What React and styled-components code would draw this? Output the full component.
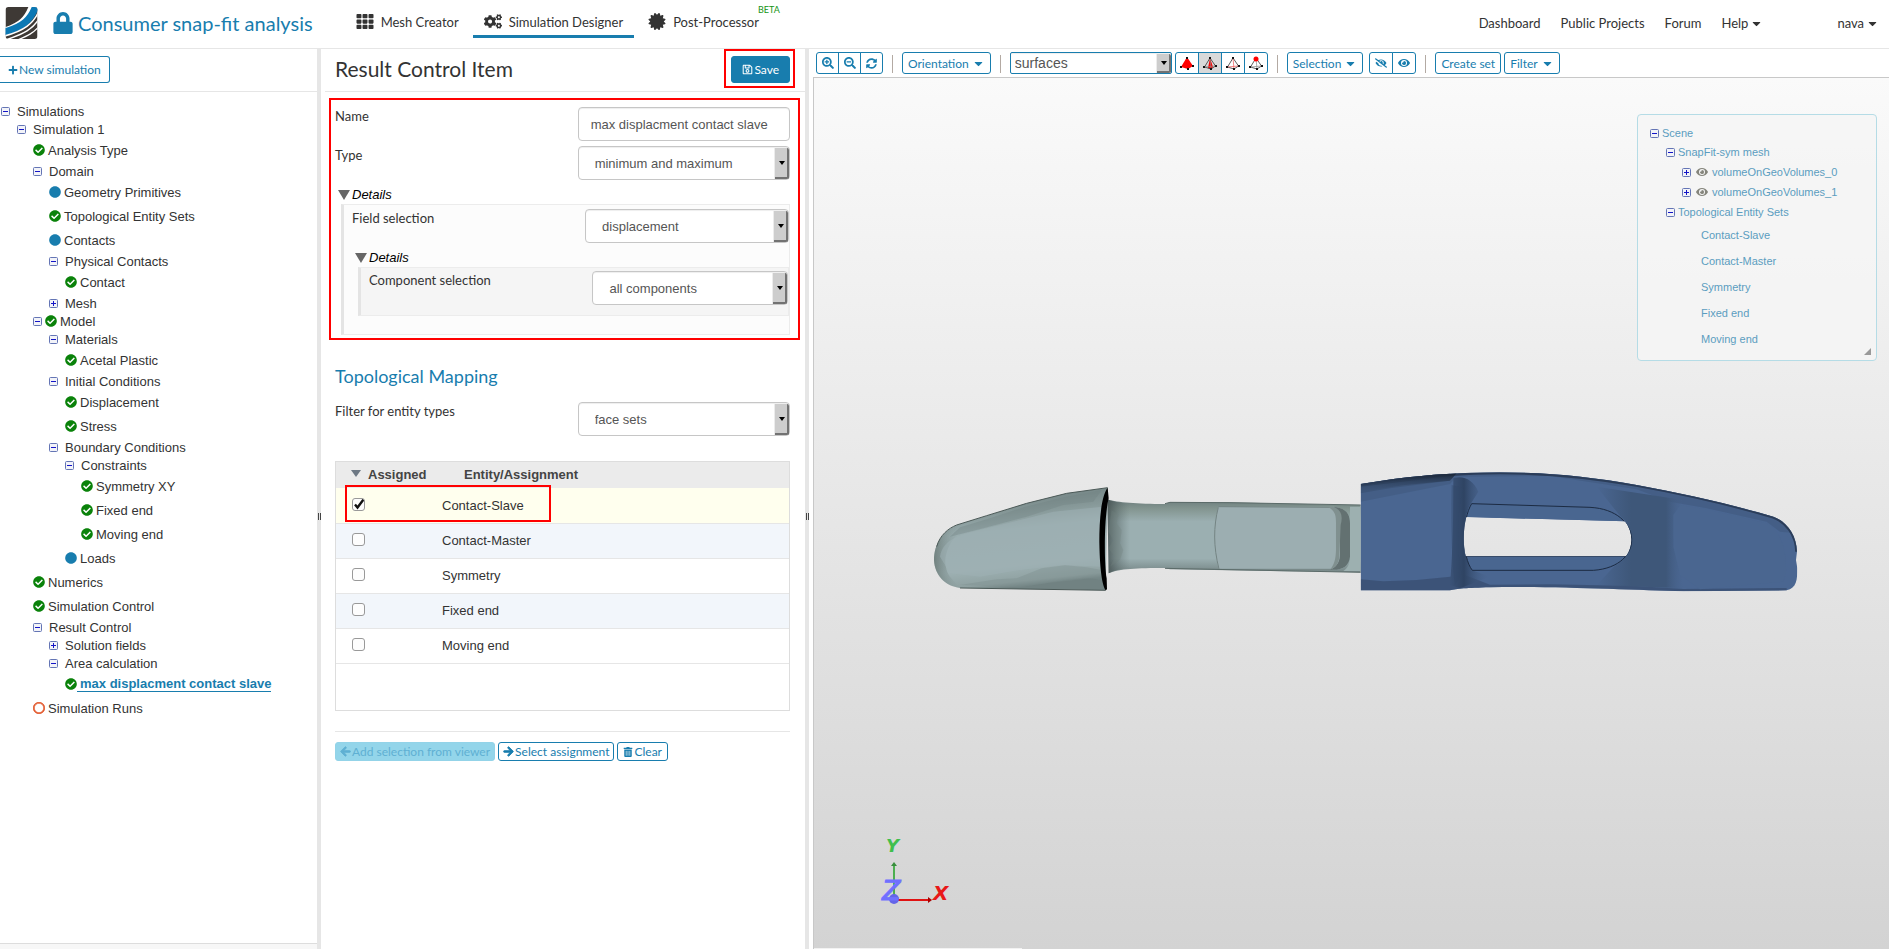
import React, { useState } from 'react';
import styled, { createGlobalStyle, css } from 'styled-components';
import {
	FaArrowLeft,
	FaArrowRight,
	FaCaretDown,
	FaCertificate,
	FaCheckCircle,
	FaCircle,
	FaCogs,
	FaEye,
	FaEyeSlash,
	FaLock,
	FaPlus,
	FaRegCircle,
	FaRegSave,
	FaSearchMinus,
	FaSearchPlus,
	FaSyncAlt,
	FaTh,
	FaTrashAlt
} from 'react-icons/fa';

const BLUE = '#187dae';
const LINE = '#e6e6e6';
const LATO = 'Lato, "Open Sans", sans-serif';
const SANS = '"Liberation Sans", Arial, sans-serif';

const GlobalStyle = createGlobalStyle`
	*, *::before, *::after { box-sizing: border-box; }
	body {
		margin: 0;
		overflow: hidden;
		background: #fff;
		color: #333;
		font-family: ${SANS};
		font-size: 13px;
	}
	button, input, select { font: inherit; color: inherit; }
	a { color: inherit; text-decoration: none; }
`;

const Page = styled.div`
	display: flex;
	flex-direction: column;
	height: 100vh;
`;

/* ---------- header ---------- */

const Header = styled.header`
	display: flex;
	flex: none;
	align-items: flex-start;
	height: 49px;
	padding: 0 10px 0 5px;
	border-bottom: 1px solid ${LINE};
	font-family: ${LATO};
	font-size: 13px;
`;

const Brand = styled.a`
	display: flex;
	align-items: center;
	height: 46px;
	margin-right: 32px;
	color: ${BLUE};
	font-size: 20px;
	white-space: nowrap;

	.lock { width: 20px; height: 22px; margin: 0 5px 0 15px; }
`;

const Nav = styled.nav`
	display: flex;
	flex: 1;
	gap: 3px;
`;

const NavTab = styled.a`
	position: relative;
	display: flex;
	align-items: center;
	gap: 7px;
	height: 38px;
	padding: 8px 11px 0;
	border-bottom: 3px solid ${props => (props.$active ? BLUE : 'transparent')};
	white-space: nowrap;

	svg { width: 18px; height: 17px; }
`;

const Beta = styled.sup`
	position: absolute;
	top: 3px;
	left: 100%;
	margin-left: -12px;
	color: #149414;
	font-size: 9px;
	line-height: 14px;
`;

const UserNav = styled(Nav)`
	flex: none;
	gap: 20px;
	line-height: 46px;

	a { display: flex; align-items: center; gap: 2px; }
	a:last-child { margin-left: 54px; }
`;

/* ---------- shared ---------- */

const Body = styled.main`
	display: grid;
	flex: 1;
	grid-template-columns: 317px 4px 484px 4px minmax(0, 1fr);
	min-height: 0;
`;

const Splitter = styled.div`
	display: flex;
	align-items: center;
	justify-content: center;
	background: ${LINE};

	&::before {
		width: 3px;
		height: 7px;
		margin-top: 34px;
		border: solid #444;
		border-width: 0 1px;
		content: '';
	}
`;

const Button = styled.button`
	display: inline-flex;
	align-items: center;
	justify-content: center;
	gap: ${props => props.$gap || 1}px;
	height: ${props => props.$height || 22}px;
	padding: 0 ${props => props.$pad || 5}px;
	border: 1px solid ${BLUE};
	border-radius: 3px;
	background: ${props => (props.$primary ? BLUE : '#fff')};
	color: ${props => (props.$primary ? '#fff' : BLUE)};
	font-family: ${LATO};
	font-size: 12px;
	white-space: nowrap;
	cursor: pointer;

	.arrow { stroke: currentColor; stroke-width: 40px; }

	&:disabled {
		border-color: #93d3e8;
		background: #93d5ea;
		color: #5fb0d3;
	}
`;

const NewButton = styled(Button)`
	border-left: 0;
	border-radius: 0 3px 3px 0;
`;

const ToggleButton = styled.button`
	display: block;
	flex: none;
	width: 9px;
	height: 9px;
	margin-top: 1px;
	padding: 0;
	border: 0;
	background: none;

	svg { display: block; }
`;

function Toggle ({ open, label }) {
	return (
		<ToggleButton aria-label={label}
					  aria-expanded={open}>
			<svg width="9"
				 height="9"
				 viewBox="0 0 9 9">
				<rect x=".5"
					  y=".5"
					  width="8"
					  height="8"
					  rx="1"
					  fill="#f2f3f8"
					  stroke="#6475b5"/>
				<path d={open ? 'M2 4.5H7' : 'M2 4.5H7M4.5 2V7'}
					  stroke="#1414c8"/>
			</svg>
		</ToggleButton>
	);
}

const Field = css`
	width: 100%;
	height: 34px;
	padding: 0 12px;
	border: 1px solid #c6c6c6;
	border-radius: 4px;
	background: #fff;
	color: #555;
	box-shadow: inset 0 1px 1px rgba(0, 0, 0, .07);
`;

const TextInput = styled.input`${Field}`;

const SelectBox = styled.span`
	position: relative;
	display: block;
	width: ${props => props.$width || 'auto'};

	select {
		${Field};
		padding: 0 20px 0 16px;
		appearance: none;
	}

	${props => props.$compact && css`
		select {
			height: 22px;
			padding: 0 20px 0 4px;
			border-color: ${BLUE};
			border-radius: 2px;
			font-size: 14px;
		}
	`}

	&::before {
		position: absolute;
		top: 2px;
		right: 1px;
		bottom: 1px;
		width: 14px;
		border: solid #727272;
		border-width: 0 2px 2px 0;
		border-radius: 0 2px 2px 0;
		background: #cdcdcd;
		box-shadow: -1px 0 #ececec;
		content: '';
		pointer-events: none;
	}

	&::after {
		position: absolute;
		top: 50%;
		right: 5px;
		margin-top: -2px;
		border: solid transparent;
		border-width: 4px 3px 0;
		border-top-color: #000;
		content: '';
		pointer-events: none;
	}
`;

function Select ({ id, value, compact, width, label }) {
	return (
		<SelectBox $compact={compact}
				   $width={width}>
			<select id={id}
					aria-label={label}
					defaultValue={value}>
				<option>{value}</option>
			</select>
		</SelectBox>
	);
}

/* ---------- simulation tree ---------- */

const Sidebar = styled.aside`
	display: flex;
	flex-direction: column;
	min-width: 0;
`;

const SidebarTop = styled.div`
	height: 43px;
	padding-top: 7px;
	border-bottom: 1px solid ${LINE};
`;

const Tree = styled.ul`
	flex: 1;
	margin: 0;
	padding: 10px 0 0 1px;
	list-style: none;
`;

const TreeItem = styled.li`
	display: flex;
	align-items: center;
	gap: ${props => (props.$folder ? 7 : 3)}px;
	height: ${props => (props.$folder ? 18 : 24)}px;
	margin-left: ${props => props.$level * 16}px;
	white-space: nowrap;
`;

const Status = styled.span`
	display: flex;
	color: ${props => props.$color};

	svg { width: 12px; height: 12px; }
	.ring { stroke: currentColor; stroke-width: 28px; }
`;

const ModelLabel = styled.span`
	display: flex;
	align-items: center;
	gap: 3px;
	margin-left: -4px;
`;

const CurrentItem = styled.a`
	margin-left: -3px;
	padding-left: 3px;
	border-bottom: 1px solid ${BLUE};
	color: ${BLUE};
	font-weight: bold;
	line-height: 14px;
`;

const SidebarFoot = styled.div`
	height: 6px;
	border-top: 1px solid #ddd;
	background: #f7f7f7;
`;

const STATUS = {
	ok  : [FaCheckCircle, '#0a820a'],
	todo: [FaCircle, BLUE],
	none: [FaRegCircle, '#e2582c', 'ring']
};

const TREE = [
	[0, 'open', 'Simulations'],
	[1, 'open', 'Simulation 1'],
	[2, 'ok', 'Analysis Type'],
	[2, 'open', 'Domain'],
	[3, 'todo', 'Geometry Primitives'],
	[3, 'ok', 'Topological Entity Sets'],
	[3, 'todo', 'Contacts'],
	[3, 'open', 'Physical Contacts'],
	[4, 'ok', 'Contact'],
	[3, 'closed', 'Mesh'],
	[2, 'open', 'Model', true],
	[3, 'open', 'Materials'],
	[4, 'ok', 'Acetal Plastic'],
	[3, 'open', 'Initial Conditions'],
	[4, 'ok', 'Displacement'],
	[4, 'ok', 'Stress'],
	[3, 'open', 'Boundary Conditions'],
	[4, 'open', 'Constraints'],
	[5, 'ok', 'Symmetry XY'],
	[5, 'ok', 'Fixed end'],
	[5, 'ok', 'Moving end'],
	[4, 'todo', 'Loads'],
	[2, 'ok', 'Numerics'],
	[2, 'ok', 'Simulation Control'],
	[2, 'open', 'Result Control'],
	[3, 'closed', 'Solution fields'],
	[3, 'open', 'Area calculation'],
	[4, 'ok', 'max displacment contact slave', true],
	[2, 'none', 'Simulation Runs']
];

function StatusIcon ({ kind }) {
	const [Icon, color, className] = STATUS[ kind ];
	return <Status $color={color}><Icon className={className}/></Status>;
}

function SimulationTree () {
	return (
		<Tree>
			{TREE.map(([level, kind, text, marked]) => {
				const folder = kind === 'open' || kind === 'closed';
				return (
					<TreeItem key={text}
							  $level={level}
							  $folder={folder}>
						{folder ? <Toggle open={kind === 'open'} label={text}/> : <StatusIcon kind={kind}/>}
						{folder && marked && <ModelLabel><StatusIcon kind="ok"/>{text}</ModelLabel>}
						{!folder && marked && <CurrentItem href="#item">{text}</CurrentItem>}
						{!marked && <span>{text}</span>}
					</TreeItem>
				);
			})}
		</Tree>
	);
}

/* ---------- settings panel ---------- */

const Panel = styled.section`
	min-width: 0;
	font-size: 13px;
`;

const PanelTop = styled.div`
	display: flex;
	align-items: flex-start;
	justify-content: space-between;
	height: 43px;
	margin-left: 4px;
	padding: 0 10px;
	border-bottom: 1px solid ${LINE};

	h1 {
		margin: 0;
		font-family: ${LATO};
		font-size: 21px;
		font-weight: normal;
		line-height: 40px;
	}
`;

const SaveMark = styled.div`
	padding: 5px 3px 3px 5px;
	border: 2px solid #f00;
`;

const FormMark = styled.div`
	margin: 6px 5px 0 8px;
	padding: 7px 8px 3px 4px;
	border: 2px solid #f00;
`;

const FormRow = styled.div`
	display: grid;
	grid-template-columns: minmax(0, 8fr) minmax(0, 7fr);
	align-items: start;
	margin-bottom: 5px;

	label {
		font-family: ${LATO};
		font-size: 13px;
		line-height: 18px;
	}
`;

const Details = styled.details`
	summary {
		display: flex;
		align-items: center;
		gap: 2px;
		height: 19px;
		padding-left: 3px;
		color: #000;
		font-style: italic;
		list-style: none;
	}

	summary::before {
		border: solid transparent;
		border-width: 10px 6px 0;
		border-top-color: #666;
		content: '';
	}
`;

const DetailsBox = styled.div`
	margin-left: 6px;
	padding: ${props => (props.$inner ? '3px 0 5px 8px' : '4px 0 18px 8px')};
	border: 1px solid #ececec;
	border-left: 3px solid #e4e4e4;
	background: ${props => (props.$inner ? '#f5f5f5' : '#fcfcfc')};
`;

const Mapping = styled.div`
	padding: 25px 15px 0 14px;

	h2 {
		margin: 0 0 15px;
		color: ${BLUE};
		font-family: ${LATO};
		font-size: 18px;
		font-weight: normal;
		line-height: 22px;
	}
`;

const TableBox = styled.div`
	position: relative;
	min-height: 250px;
	margin-top: 25px;
	border: 1px solid #ddd;
`;

const RowMark = styled.div`
	position: absolute;
	top: 23px;
	left: 9px;
	width: 206px;
	height: 37px;
	border: 2px solid #f00;
	pointer-events: none;
`;

const Table = styled.table`
	width: 100%;
	border-collapse: collapse;
	table-layout: fixed;

	th {
		height: 26px;
		padding: 0 0 1px 22px;
		background: #ebebeb;
		color: #444;
		text-align: left;
	}

	th:first-child {
		width: 106px;
		padding: 0 0 1px 15px;
		white-space: nowrap;
	}

	th:first-child::before {
		display: inline-block;
		margin: 0 7px 2px 0;
		border: solid transparent;
		border-width: 7px 5px 0;
		border-top-color: #6d7884;
		content: '';
	}

	td {
		height: 35px;
		padding: 0;
		border-bottom: 1px solid ${LINE};
	}

	td:first-child { padding-left: 16px; }
	tbody tr:nth-child(even) { background: #f2f6fb; }
`;

const Row = styled.tr`
	${props => props.$checked && 'background: #ffffee;'}
`;

const Check = styled.input`
	display: block;
	width: 13px;
	height: 13px;
	margin: 0 0 2px;
	border: 1px solid #999;
	border-radius: 3px;
	background: #fdfdfd;
	appearance: none;

	&:checked {
		background: #fdfdfd url("data:image/svg+xml,%3Csvg xmlns='http://www.w3.org/2000/svg' viewBox='0 0 12 12'%3E%3Cpath d='M2 6.5L4.5 9.5L10.5 1.5' fill='none' stroke='%23111' stroke-width='2.4'/%3E%3C/svg%3E") center / 12px 12px no-repeat;
	}
`;

const Actions = styled.div`
	display: flex;
	gap: 3px;
	margin-top: 20px;
	padding-top: 10px;
	border-top: 1px solid ${LINE};
`;

const ENTITIES = ['Contact-Slave', 'Contact-Master', 'Symmetry', 'Fixed end', 'Moving end'];

function AssignmentTable () {
	const [assigned, setAssigned] = useState(['Contact-Slave']);

	const toggle = (name) => {
		setAssigned(assigned.includes(name) ? assigned.filter(v => v !== name) : [...assigned, name]);
	};

	return (
		<TableBox>
			<Table>
				<thead>
					<tr>
						<th>Assigned</th>
						<th>Entity/Assignment</th>
					</tr>
				</thead>
				<tbody>
					{ENTITIES.map((name, index) => (
						<Row key={name}
							 $checked={assigned.includes(name)}>
							<td>
								<Check type="checkbox"
									   id={`entity-${index}`}
									   checked={assigned.includes(name)}
									   onChange={() => toggle(name)}/>
							</td>
							<td><label htmlFor={`entity-${index}`}>{name}</label></td>
						</Row>
					))}
				</tbody>
			</Table>
			<RowMark/>
		</TableBox>
	);
}

function ResultControl () {
	return (
		<Panel>
			<PanelTop>
				<h1>Result Control Item</h1>
				<SaveMark>
					<Button $primary
							$height={27}
							$pad={10}><FaRegSave size={11}/>Save</Button>
				</SaveMark>
			</PanelTop>
			<FormMark>
				<FormRow>
					<label htmlFor="name">Name</label>
					<TextInput id="name"
							   defaultValue="max displacment contact slave"/>
				</FormRow>
				<FormRow>
					<label htmlFor="type">Type</label>
					<Select id="type"
							value="minimum and maximum"/>
				</FormRow>
				<Details open>
					<summary>Details</summary>
					<DetailsBox>
						<FormRow>
							<label htmlFor="field">Field selection</label>
							<Select id="field"
									value="displacement"/>
						</FormRow>
						<Details open>
							<summary>Details</summary>
							<DetailsBox $inner>
								<FormRow>
									<label htmlFor="component">Component selection</label>
									<Select id="component"
											value="all components"/>
								</FormRow>
							</DetailsBox>
						</Details>
					</DetailsBox>
				</Details>
			</FormMark>
			<Mapping>
				<h2>Topological Mapping</h2>
				<FormRow>
					<label htmlFor="filter">Filter for entity types</label>
					<Select id="filter"
							value="face sets"/>
				</FormRow>
				<AssignmentTable/>
				<Actions>
					<Button disabled
							$height={19}
							$pad={4}><FaArrowLeft className="arrow" size={11}/>Add selection from viewer</Button>
					<Button $height={19}
							$pad={4}><FaArrowRight className="arrow" size={11}/>Select assignment</Button>
					<Button $height={19}
							$pad={5}><FaTrashAlt size={10}/>Clear</Button>
				</Actions>
			</Mapping>
		</Panel>
	);
}

/* ---------- viewer ---------- */

const Viewer = styled.section`
	display: flex;
	flex-direction: column;
	min-width: 0;
	padding-left: 4px;
`;

const Toolbar = styled.div`
	display: flex;
	flex: none;
	align-items: flex-start;
	height: 28px;
	padding: 3px 0 0 3px;
`;

const Group = styled.div`
	display: flex;
	margin-right: ${props => props.$after || 0}px;

	button + button { margin-left: -1px; }
	button:not(:first-child) { border-top-left-radius: 0; border-bottom-left-radius: 0; }
	button:not(:last-child) { border-top-right-radius: 0; border-bottom-right-radius: 0; }
`;

const IconButton = styled(Button)`
	width: ${props => (props.$wide ? 24 : 23)}px;
	padding: 0;
	${props => props.$pressed && 'background: #d9d9d9;'}
`;

const Divider = styled.span`
	width: 1px;
	height: 18px;
	margin: 3px 9px 0;
	background: #b3aaa3;
`;

const Canvas = styled.div`
	position: relative;
	flex: 1;
	min-height: 0;
	border: solid #c8c8c8;
	border-width: 1px 0 0 1px;
	background: linear-gradient(#fafafa, #d3d3d3);
`;

const Model = styled.svg`
	position: absolute;
	inset: 0;
	width: 100%;
	height: 100%;
`;

const Axes = styled.svg`
	position: absolute;
	bottom: 39px;
	left: 56px;
`;

const StatusStrip = styled.div`
	position: absolute;
	bottom: 0;
	left: 0;
	width: 208px;
	height: 1px;
	background: #f2f2f2;
`;

const ScenePanel = styled.div`
	position: absolute;
	top: 36px;
	right: 12px;
	width: 240px;
	height: 247px;
	border: 1px solid #b5dce6;
	border-radius: 4px;
	background: rgba(245, 245, 245, .8);
	color: #5b9dc0;
	font-size: 11px;

	ul { margin: 0; padding: 9px 12px; list-style: none; }
	> svg { position: absolute; right: 5px; bottom: 5px; }
`;

const SceneItem = styled.li`
	display: flex;
	align-items: center;
	gap: 3px;
	height: ${props => props.$height}px;
	padding-left: ${props => props.$indent}px;

	.eye { width: 12px; height: 12px; margin: 0 1px 0 2px; color: #85857c; }
`;

const SCENE = [
	[18, 0, 'Scene', 'open'],
	[20, 16, 'SnapFit-sym mesh', 'open'],
	[20, 32, 'volumeOnGeoVolumes_0', 'closed', true],
	[20, 32, 'volumeOnGeoVolumes_1', 'closed', true],
	[20, 16, 'Topological Entity Sets', 'open'],
	...ENTITIES.map(name => [26, 51, name])
];

function PickIcon ({ kind }) {
	return (
		<svg width="14"
			 height="14"
			 viewBox="0 0 14 14"
			 fill="none">
			{kind === 'volume' && <path d="M7 1L1 11L8 13L13 10Z" fill="#f00"/>}
			{kind === 'face' && <path d="M7 2L5 12L8 13L10 11Z" fill="#f00"/>}
			{kind !== 'volume' && <path d="M7 2L1.500 11L8 13L12.500 10Z"
										stroke="#333"
										strokeWidth=".8"/>}
			{kind !== 'volume' && <path d="M7 2L8 13M1.500 11L12.500 10"
										stroke={kind === 'edge' ? '#e55' : '#888'}
										strokeWidth=".7"/>}
			<path d="M6 1H8V3H6ZM0 10H2V12H0ZM7 12H9V14H7ZM12 9H14V11H12Z"
				  fill="#111"/>
			{kind === 'point' && <circle cx="7"
										 cy="3"
										 r="2.500"
										 fill="#f00"/>}
		</svg>
	);
}

// both halves are drawn at triple size and scaled down, so the facets stay on whole numbers
function SnapFitModel () {
	return (
		<Model viewBox="814 78 1075 871"
			   role="img"
			   aria-label="Snap-fit model">
			<defs>
				<linearGradient id="head" x1=".1" y1="0" x2=".28" y2="1">
					<stop offset="0" stopColor="#667676"/>
					<stop offset=".3" stopColor="#879999"/>
					<stop offset=".45" stopColor="#9aadaf"/>
					<stop offset=".8" stopColor="#9db0b2"/>
					<stop offset=".95" stopColor="#8fa1a1"/>
					<stop offset="1" stopColor="#718282"/>
				</linearGradient>
				<linearGradient id="tip" x1="0" y1="0" x2="1" y2="0">
					<stop offset="0" stopColor="#56645f" stopOpacity=".6"/>
					<stop offset="1" stopColor="#879999" stopOpacity="0"/>
				</linearGradient>
				<linearGradient id="neck" x1="0" y1="0" x2="0" y2="1">
					<stop offset="0" stopColor="#6b7c7c"/>
					<stop offset=".12" stopColor="#82948f"/>
					<stop offset=".3" stopColor="#9bafb1"/>
					<stop offset=".8" stopColor="#9bafb1"/>
					<stop offset="1" stopColor="#738383"/>
				</linearGradient>
				<linearGradient id="neckShade" x1="0" y1="0" x2="1" y2="0">
					<stop offset="0" stopColor="#3c4848" stopOpacity=".75"/>
					<stop offset="1" stopColor="#5e6e6e" stopOpacity="0"/>
				</linearGradient>
				<linearGradient id="top" x1="0" y1="0" x2="0" y2="1">
					<stop offset="0" stopColor="#1b2738"/>
					<stop offset="1" stopColor="#33496a" stopOpacity="0"/>
				</linearGradient>
				<linearGradient id="crease" x1="0" y1="0" x2="1" y2="0">
					<stop offset="0" stopColor="#3b5378"/>
					<stop offset=".35" stopColor="#2f4463"/>
					<stop offset="1" stopColor="#4a6691" stopOpacity="0"/>
				</linearGradient>
				<linearGradient id="waist" x1="0" y1="0" x2="1" y2="0">
					<stop offset="0" stopColor="#3e5779" stopOpacity="0"/>
					<stop offset=".4" stopColor="#3e5779"/>
					<stop offset=".8" stopColor="#3e5779"/>
					<stop offset="1" stopColor="#46618a" stopOpacity="0"/>
				</linearGradient>
				<clipPath id="bodyClip">
					<path clipRule="evenodd"
						  d="M32 72L130 57C250 43 330 38 450 37C600 38 720 50 860 75C1000 100 1150 135 1270 170C1310 185 1340 225 1341 275L1338 300L1342 325C1342 360 1340 385 1310 391L1000 394C850 390 600 378 420 382C350 384 320 386 300 391H32ZM349 171C340 205 338 250 347 289H828C850 260 850 215 825 184Z"/>
				</clipPath>
			</defs>

			<g transform="translate(920 460) scale(.33333)">
				<path d="M562 118C580 126 650 133 735 132L750 126L930 127L1322 135V337L750 328L735 324C650 324 600 326 566 340Z"
					  fill="url(#neck)"/>
				<path d="M562 118C580 126 610 130 630 131V326C600 326 580 332 566 340Z"
					  fill="url(#neckShade)"/>
				<path d="M565 215L580 240L565 265L585 290L570 320L600 300L610 270L600 250L605 210L590 190L595 165L575 150Z"
					  fill="#70807f"
					  opacity=".3"/>
				<path d="M895 140H1240C1275 143 1290 160 1290 190V290C1286 318 1270 330 1235 329H897C883 290 879 200 895 140Z"
					  fill="#9caeb1"/>
				<path d="M1290 140H1322V333H1270C1285 322 1290 310 1290 290Z"
					  fill="#9db0b0"/>
				<path d="M895 140L1240 142M897 328H1235M895 142C880 200 880 260 897 327"
					  fill="none"
					  stroke="#738483"
					  strokeWidth="3"/>
				<path d="M1240 141C1280 143 1290 165 1290 190V290C1287 320 1265 332 1230 329C1255 320 1260 300 1260 280V190C1260 160 1256 150 1240 141Z"
					  fill="#637171"/>
				<path d="M1240 141C1262 148 1270 165 1262 195L1258 290C1256 310 1248 322 1230 329C1242 315 1247 300 1248 270V190C1248 165 1246 155 1225 141Z"
					  fill="#80908f"/>
				<path d="M735 131L750 127L930 128L1322 135M735 325L1322 337"
					  fill="none"
					  stroke="#5b6b69"
					  strokeWidth="3"/>

				<path d="M563 83L440 100L320 130L200 167L110 195C70 212 42 250 42 300C44 345 75 378 120 384L557 391Z"
					  fill="url(#head)"/>
				<path d="M110 195C70 212 42 250 42 300C44 345 75 378 120 384L90 350C70 320 65 270 120 215Z"
					  fill="url(#tip)"/>
				<path d="M60 290C70 240 110 225 200 205L400 155L548 140L540 320L430 315L300 330L180 350L90 340Z"
					  fill="#9fb1b4"
					  opacity=".55"/>
				<path d="M120 375L230 358L290 355L365 325L435 316L500 322L545 330V360L480 350L420 362L380 370L300 382Z"
					  fill="#7c8f8f"
					  opacity=".4"/>
				<path d="M545 90L430 112L310 142L200 178L120 202L90 230L190 205L320 170L430 135L520 125Z"
					  fill="#6f8080"
					  opacity=".35"/>
				<path d="M50 260C60 225 85 205 110 195L200 167L320 130L440 100L563 83M120 384L557 391"
					  fill="none"
					  stroke="#4b5957"
					  strokeWidth="3"/>
				<path d="M563 83C542 110 538 190 538 245C539 310 544 370 557 391L561 388L560 355C552 310 552 170 566 115Z"
					  fill="#000"/>
			</g>

			<g transform="translate(1350 460) scale(.33333)"
			   clipPath="url(#bodyClip)">
				<rect x="30"
					  y="35"
					  width="1315"
					  height="362"
					  fill="#4a6691"/>
				<path d="M32 100L120 85L300 62V35H32Z"
					  fill="#334867"/>
				<path d="M32 125L300 72L320 50L600 48L860 88L960 125L1070 145L1250 185L1290 215L1350 220V160L860 60L450 30L32 80Z"
					  fill="#415b82"
					  opacity=".7"/>
				<path d="M32 72L130 57C250 43 330 38 450 37C600 38 720 50 860 75C1000 100 1150 135 1270 170C1310 185 1340 225 1341 275"
					  fill="none"
					  stroke="#2b3d59"
					  strokeWidth="11"/>
				<path d="M32 72L130 57L250 43L320 40L300 62L160 76L32 95Z"
					  fill="url(#top)"/>
				<path d="M32 358L100 364L200 360L300 350L330 340L370 355L420 374L600 373L860 378L1000 387L1310 384V400H32Z"
					  fill="#384e70"
					  opacity=".75"/>
				<path d="M310 55C340 45 370 60 385 95L360 135C335 180 335 290 367 331L420 350L330 385L300 375C310 260 310 120 310 55Z"
					  fill="url(#crease)"/>
				<path d="M305 75C303 160 303 300 315 375L335 340C320 280 320 150 340 85Z"
					  fill="#334868"
					  opacity=".4"/>
				<path d="M740 80L1000 120L985 250L1000 385L740 375L820 290L845 240L820 180Z"
					  fill="url(#waist)"/>
				<path d="M970 165L990 135L1070 148L1250 190C1290 210 1310 260 1308 340L1300 365L1050 388L990 345L970 260Z"
					  fill="#4a6690"/>
				<path d="M365 132L720 143C780 148 810 165 828 186L349 172ZM347 289H828C810 315 780 330 730 331H367Z"
					  fill="#496690"/>
				<path d="M365 131L720 142C880 150 890 320 730 331H367C335 290 335 180 365 131Z"
					  fill="none"
					  stroke="#1c2b42"
					  strokeWidth="3"/>
				<path d="M347 289H828"
					  stroke="#25364f"
					  strokeWidth="3"/>
			</g>
		</Model>
	);
}

function AxisCross () {
	return (
		<Axes width="80"
			  height="80"
			  viewBox="870 830 80 80"
			  fontFamily='"DejaVu Sans", sans-serif'
			  fontStyle="italic"
			  fontWeight="bold">
			<path d="M894 866V898" stroke="#4caf50" strokeWidth="2"/>
			<path d="M894 862L897 866H891Z" fill="#388e3c"/>
			<path d="M896 900H930" stroke="#e01212" strokeWidth="2"/>
			<path d="M932 900L928 897V903Z" fill="#a00"/>
			<circle cx="894" cy="899" r="5" fill="#6464e8"/>
			<text x="886" y="852" fontSize="18" fill="#3fbf4c">Y</text>
			<text x="882" y="900" fontSize="27" fontWeight="normal" fill="#7070ff" stroke="#7070ff">Z</text>
			<text x="933" y="900" fontSize="20" fill="#e81818">X</text>
		</Axes>
	);
}

function Scene () {
	return (
		<ScenePanel>
			<ul>
				{SCENE.map(([height, indent, text, kind, eye]) => (
					<SceneItem key={text}
							   $height={height}
							   $indent={indent}>
						{kind && <Toggle open={kind === 'open'} label={text}/>}
						{eye && <FaEye className="eye"/>}
						<span>{text}</span>
					</SceneItem>
				))}
			</ul>
			<svg width="7"
				 height="7"
				 viewBox="0 0 7 7">
				<path d="M7 0V7H0Z" fill="#999"/>
			</svg>
		</ScenePanel>
	);
}

function ModelViewer () {
	const [pick, setPick] = useState('face');

	return (
		<Viewer>
			<Toolbar>
				<Group>
					<IconButton aria-label="Zoom in"><FaSearchPlus size={12}/></IconButton>
					<IconButton aria-label="Zoom out"><FaSearchMinus size={12}/></IconButton>
					<IconButton aria-label="Refresh"><FaSyncAlt size={11}/></IconButton>
				</Group>
				<Divider/>
				<Button $gap={3}>Orientation <FaCaretDown size={13}/></Button>
				<Divider/>
				<Group $after={3}>
					<Select compact
							width="162px"
							label="Pick mode"
							value="surfaces"/>
				</Group>
				<Group>
					{['volume', 'face', 'edge', 'point'].map(kind => (
						<IconButton key={kind}
									aria-label={kind}
									$wide
									$pressed={pick === kind}
									onClick={() => setPick(kind)}><PickIcon kind={kind}/></IconButton>
					))}
				</Group>
				<Divider/>
				<Group $after={6}>
					<Button $gap={3}>Selection <FaCaretDown size={13}/></Button>
				</Group>
				<Group>
					<IconButton aria-label="Hide" $wide><FaEyeSlash size={12}/></IconButton>
					<IconButton aria-label="Show" $wide><FaEye size={12}/></IconButton>
				</Group>
				<Divider/>
				<Group $after={3}>
					<Button>Create set</Button>
				</Group>
				<Button $gap={3}>Filter <FaCaretDown size={13}/></Button>
			</Toolbar>
			<Canvas>
				<SnapFitModel/>
				<AxisCross/>
				<Scene/>
				<StatusStrip/>
			</Canvas>
		</Viewer>
	);
}

function Logo () {
	return (
		<svg width="33"
			 height="32"
			 viewBox="0 0 32 32">
			<clipPath id="logoClip">
				<rect width="32"
					  height="32"
					  rx="3"/>
			</clipPath>
			<g clipPath="url(#logoClip)"
			   fill="none">
				<rect width="32"
					  height="32"
					  fill="#3e3935"/>
				<path d="M27 -1C22 13 15 19 -1 24" stroke="#fff" strokeWidth="7"/>
				<path d="M31 -3C26 13 17 20 -1 25" stroke="#0b78b4" strokeWidth="7"/>
				<path d="M34 3C28 17 18 24 -1 29" stroke="#fff" strokeWidth="1.600"/>
				<path d="M34 11C28 22 18 27 0 33" stroke="#fff" strokeWidth="1.500"/>
				<path d="M34 19C28 26 22 29 12 33" stroke="#fff" strokeWidth="1.300"/>
			</g>
		</svg>
	);
}

export default function App () {
	return (
		<>
			<GlobalStyle/>
			<Page>
				<Header>
					<Brand href="#home">
						<Logo/>
						<FaLock className="lock"/>
						Consumer snap-fit analysis
					</Brand>
					<Nav>
						<NavTab href="#mesh"><FaTh/>Mesh Creator</NavTab>
						<NavTab href="#designer" $active><FaCogs/>Simulation Designer</NavTab>
						<NavTab href="#post"><FaCertificate/>Post-Processor<Beta>BETA</Beta></NavTab>
					</Nav>
					<UserNav>
						<a href="#dashboard">Dashboard</a>
						<a href="#projects">Public Projects</a>
						<a href="#forum">Forum</a>
						<a href="#help">Help <FaCaretDown size={13}/></a>
						<a href="#user">nava <FaCaretDown size={13}/></a>
					</UserNav>
				</Header>
				<Body>
					<Sidebar>
						<SidebarTop>
							<NewButton $height={27}
									   $pad={8}><FaPlus size={10}/>New simulation</NewButton>
						</SidebarTop>
						<SimulationTree/>
						<SidebarFoot/>
					</Sidebar>
					<Splitter/>
					<ResultControl/>
					<Splitter/>
					<ModelViewer/>
				</Body>
			</Page>
		</>
	);
}
